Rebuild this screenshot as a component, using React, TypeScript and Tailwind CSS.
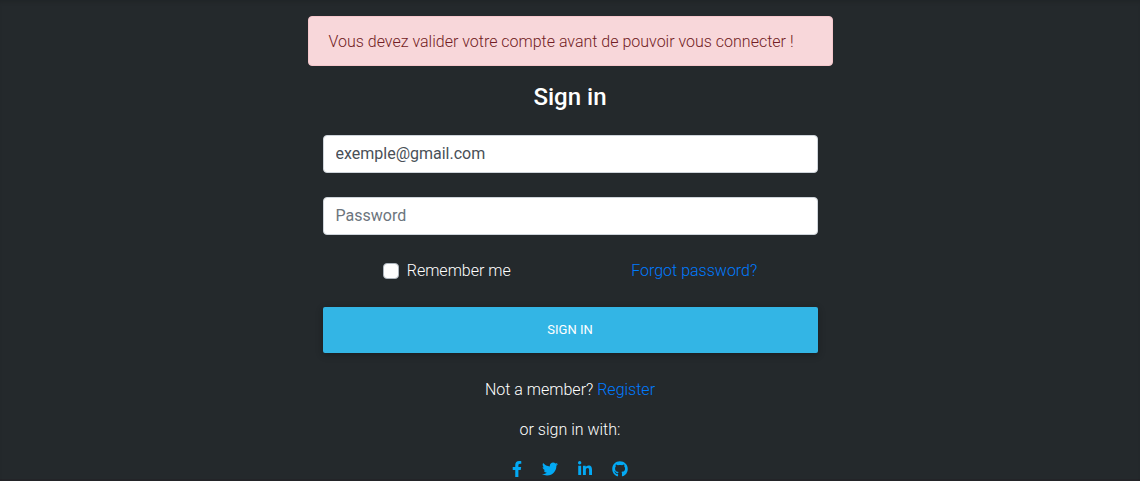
import { FaFacebookF, FaGithub, FaLinkedinIn, FaTwitter } from "react-icons/fa";

const socials = [
  { name: "Facebook", Icon: FaFacebookF, box: "w-[10px]" },
  { name: "Twitter", Icon: FaTwitter, box: "w-4" },
  { name: "LinkedIn", Icon: FaLinkedinIn, box: "w-[14px]" },
  { name: "GitHub", Icon: FaGithub, box: "w-4" },
];

const field =
  "h-[38px] w-full rounded border border-[#ced4da] bg-white px-3 pb-0.5 text-base font-normal text-[#495057] outline-none placeholder:text-[#6c757d] placeholder:opacity-100";

export default function App() {
  return (
    <div className="min-h-screen bg-[#24292c] font-['Roboto',sans-serif] text-base leading-6 font-light text-white shadow-[inset_0_4px_4px_-2px_rgba(0,0,0,0.12),inset_0_-2px_0_0_#232428]">
      <main className="mx-auto w-full max-w-[525px] pt-4">
        <div role="alert" className="rounded border border-[#f5c6cb] bg-[#f8d7da] px-5 pt-[13px] pb-[11px] text-[#721c24]">
          Vous devez valider votre compte avant de pouvoir vous connecter !
        </div>

        <form className="px-[15px] pt-4 text-center" onSubmit={(e) => e.preventDefault()}>
          <h1 className="mb-[22px] text-2xl leading-[31px] font-medium">Sign in</h1>
          <div className="flex flex-col gap-6">
            <input type="email" aria-label="E-mail" placeholder="E-mail" defaultValue="exemple@gmail.com" className={field} />
            <input type="password" aria-label="Password" placeholder="Password" className={field} />

            <div className="flex justify-around">
              <label className="flex items-center gap-2">
                <input
                  type="checkbox"
                  className="size-4 appearance-none rounded border border-[#adb5bd] bg-white checked:bg-[#007bff]"
                />
                Remember me
              </label>
              <a href="#forgot" className="text-[#007bff]">Forgot password?</a>
            </div>

            <button
              type="submit"
              className="h-[46px] w-full rounded-xs bg-[#33b5e5] text-[13px] font-normal text-white uppercase shadow-[0_2px_5px_rgba(0,0,0,0.16),0_2px_10px_rgba(0,0,0,0.12)]"
            >
              Sign in
            </button>
          </div>

          <p className="mt-[25px] mb-4">
            Not a member? <a href="#register" className="text-[#007bff]">Register</a>
          </p>
          <p className="mb-[15px]">or sign in with:</p>
          <div className="flex h-6 items-center justify-center gap-5 text-[#03a9f4]">
            {socials.map(({ name, Icon, box }) => (
              <a key={name} href={`#${name.toLowerCase()}`} aria-label={name}>
                <Icon className={`h-4 ${box}`} />
              </a>
            ))}
          </div>
        </form>
      </main>
    </div>
  );
}
